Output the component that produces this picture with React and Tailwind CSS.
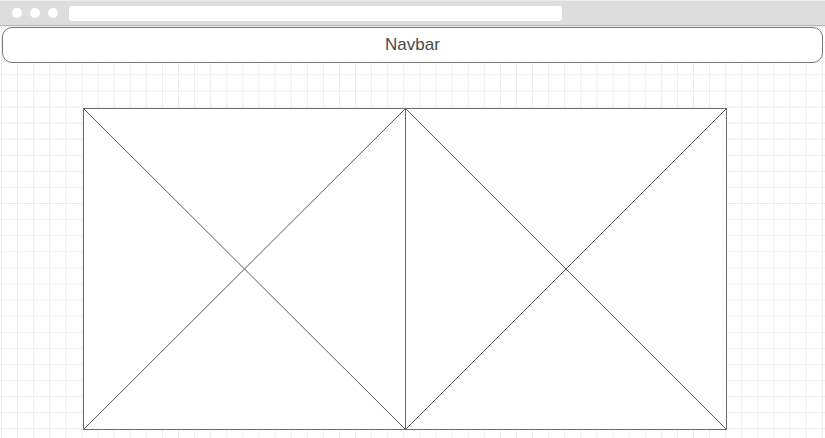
import React from "react";

function Placeholder({ className }) {
  return (
    <div className={"relative h-full shrink-0 border border-[#6b6b6b] bg-white " + className}>
      <svg className="absolute inset-0 h-full w-full" viewBox="0 0 100 100" preserveAspectRatio="none">
        <line x1="0" y1="0" x2="100" y2="100" stroke="#5a5a5a" strokeWidth="1" vectorEffect="non-scaling-stroke" />
        <line x1="100" y1="0" x2="0" y2="100" stroke="#5a5a5a" strokeWidth="1" vectorEffect="non-scaling-stroke" />
      </svg>
    </div>
  );
}

export default function App() {
  return (
    <div className="flex h-[438px] w-[825px] flex-col overflow-hidden bg-white font-['Liberation_Sans',Arial,sans-serif]">
      <div className="flex h-[26px] shrink-0 items-center border-t border-[#ececec] border-b border-b-[#b5b5b5] bg-[#dddddd]">
        <div className="ml-[12px] flex gap-[8px]">
          <div className="h-[10px] w-[10px] rounded-full bg-white" />
          <div className="h-[10px] w-[10px] rounded-full bg-white" />
          <div className="h-[10px] w-[10px] rounded-full bg-white" />
        </div>
        <div className="ml-[11px] mt-[1px] h-[15px] w-[493px] rounded-[3px] bg-white" />
      </div>
      <div className="flex-1 bg-white bg-[linear-gradient(to_right,#ececec_1px,transparent_1px),linear-gradient(to_bottom,#ececec_1px,transparent_1px)] bg-[size:16.1px_16.1px] bg-[position:1px_0px]">
        <div className="mx-[2px] mt-[1px] flex h-[36px] items-center justify-center rounded-[10px] border border-[#777] bg-white text-[17px] text-[#4a4a4a]">
          Navbar
        </div>
        <div className="ml-[83px] mt-[45px] flex h-[322px]">
          <Placeholder className="w-[323px]" />
          <Placeholder className="-ml-px w-[322px]" />
        </div>
      </div>
    </div>
  );
}
